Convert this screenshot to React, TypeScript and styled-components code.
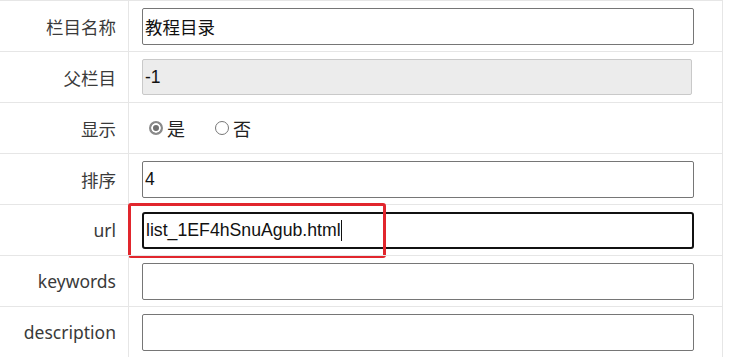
import React, { FC } from "react";
import styled, { createGlobalStyle } from "styled-components";

const GlobalStyle = createGlobalStyle`
  html, body {
    margin: 0;
    padding: 0;
    background: #fff;
  }
  body {
    font-family: "Liberation Sans", "Noto Sans CJK SC", sans-serif;
    color: #333;
  }
`;

const line = "#e6e6e6";

interface FieldDef {
  label: string;
  value?: string;
  kind: "text" | "disabled" | "radio" | "focused";
}

const fields: FieldDef[] = [
  { label: "栏目名称", value: "教程目录", kind: "text" },
  { label: "父栏目", value: "-1", kind: "disabled" },
  { label: "显示", kind: "radio" },
  { label: "排序", value: "4", kind: "text" },
  { label: "url", value: "list_1EF4hSnuAgub.html", kind: "focused" },
  { label: "keywords", value: "", kind: "text" },
  { label: "description", value: "", kind: "text" },
];

const App: FC = () => {
  return (
    <>
      <GlobalStyle />
      <Form>
        {fields.map((f, idx) => (
          <Row key={idx}>
            <Label>{f.label}</Label>
            <Cell>
              {f.kind === "text" && <TextInput defaultValue={f.value} />}
              {f.kind === "disabled" && <TextInput disabled defaultValue={f.value} />}
              {f.kind === "radio" && (
                <RadioGroup>
                  <RadioItem>
                    <Radio checked />
                    <span>是</span>
                  </RadioItem>
                  <RadioItem>
                    <Radio />
                    <span>否</span>
                  </RadioItem>
                </RadioGroup>
              )}
              {f.kind === "focused" && (
                <FocusedInput>
                  <span>{f.value}</span>
                  <Caret />
                </FocusedInput>
              )}
            </Cell>
            {f.kind === "focused" && <Highlight />}
          </Row>
        ))}
      </Form>
    </>
  );
};

const Form = styled.div`
  width: 722px;
  border-right: 1px solid ${line};
`;

const Row = styled.div`
  position: relative;
  display: grid;
  grid-template-columns: 129px 1fr;
  height: 51px;
  box-sizing: border-box;
  border-top: 1px solid ${line};
`;

const Label = styled.div`
  display: flex;
  align-items: center;
  justify-content: flex-end;
  padding-right: 12px;
  border-right: 1px solid ${line};
  font-family: "Noto Sans", "Noto Sans CJK SC", sans-serif;
  font-size: 17.5px;
  color: #3a3a3a;
`;

const Cell = styled.div`
  display: flex;
  align-items: center;
  padding-left: 13px;
`;

const TextInput = styled.input`
  box-sizing: border-box;
  width: 552px;
  height: 37px;
  margin: 0;
  padding: 0 2px;
  border: 1px solid #767676;
  border-radius: 2px;
  font-family: "Liberation Sans", "Noto Sans CJK SC", sans-serif;
  font-size: 17.5px;
  color: #111;
  background: #fff;
  outline: none;

  &:disabled {
    width: 550px;
    height: 36px;
    border-color: #c9c9c9;
    background: #ececec;
    color: #111;
  }
`;

const FocusedInput = styled.div`
  box-sizing: border-box;
  display: flex;
  align-items: center;
  width: 552px;
  height: 37px;
  padding: 0 2px;
  border: 2px solid #111;
  border-radius: 3px;
  font-size: 17.7px;
  color: #111;
`;

const Caret = styled.span`
  display: inline-block;
  width: 1px;
  height: 21px;
  background: #111;
`;

const RadioGroup = styled.div`
  display: flex;
  align-items: center;
  gap: 30px;
  padding-left: 7px;
  font-size: 18px;
  color: #222;
`;

const RadioItem = styled.label`
  display: flex;
  align-items: center;
  gap: 4px;
`;

const Radio = styled.span<{ checked?: boolean }>`
  box-sizing: border-box;
  display: inline-block;
  width: 14px;
  height: 14px;
  border-radius: 50%;
  border: ${(p) => (p.checked ? "2px solid #8a8a8a" : "1px solid #777")};
  background: ${(p) => (p.checked ? "#707070" : "#fff")};
  box-shadow: ${(p) => (p.checked ? "inset 0 0 0 2px #fff" : "none")};
`;

const Highlight = styled.div`
  position: absolute;
  left: 128px;
  top: -2px;
  width: 258px;
  height: 55px;
  box-sizing: border-box;
  border: 3px solid #e1262d;
  border-radius: 3px;
  pointer-events: none;
`;

export default App;
